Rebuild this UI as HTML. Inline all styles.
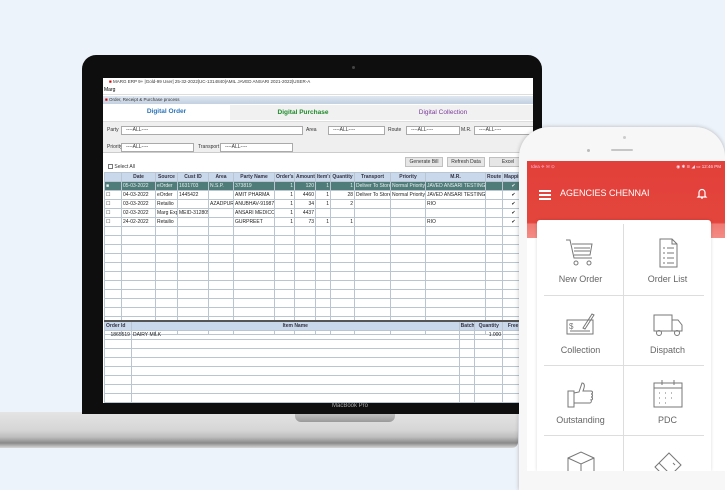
<!DOCTYPE html>
<html><head><meta charset="utf-8"><style>
*{margin:0;padding:0;box-sizing:border-box}
html,body{width:725px;height:490px;overflow:hidden}
body{background:#edf3fa;font-family:"Liberation Sans",sans-serif;position:relative}
#w{position:absolute;left:0;top:0;width:725px;height:490px;overflow:hidden}
.a{position:absolute}
table{border-collapse:collapse;table-layout:fixed;font-size:5px}
td{border:1px solid #b9c6d2;height:9px;padding:0 1px;white-space:nowrap;overflow:hidden;color:#222}
.h td{background:#c9d8ea;text-align:center;font-weight:bold;color:#334}
.s td{background:#4f7b78;color:#e8f0f0}
.r{text-align:right}
.sel{font-size:5px;border:1px solid #aaa;background:#fff;height:9px;color:#333;padding-left:4px;line-height:7px}
.btn{font-size:5px;background:#e6e6e6;border:1px solid #c0c0c0;text-align:center;line-height:9px;height:10px;color:#333}
.lbl{font-size:5px;color:#333}
.cell{position:absolute;width:87px;height:71px;text-align:center;font-size:9px;color:#666}
.cell svg{display:block;margin:12px auto 4px}
</style></head><body><div id="w">

<div class="a" style="left:0;top:412px;width:518px;height:36px;background:linear-gradient(#e4e4e4,#d6d6d6 50%,#bdbdbd 70%,#8a8a8a 86%,#d8d8d8);border-radius:0 0 6px 0"></div>
<div class="a" style="left:295px;top:412px;width:100px;height:10px;background:linear-gradient(#c8c8c8,#9a9a9a);border-radius:0 0 6px 6px"></div>
<div class="a" style="left:82px;top:55px;width:460px;height:359px;background:#0e0e0e;border-radius:14px 14px 0 0"></div>
<div class="a" style="left:352px;top:66px;width:3px;height:3px;background:#444;border-radius:50%"></div>
<div class="a" style="left:320px;top:403px;width:60px;font-size:6px;color:#aaa;text-align:center">MacBook Pro</div>
<div class="a" style="left:103px;top:78px;width:430px;height:325px;background:#fff;overflow:hidden">
 <div class="a" style="left:0;top:0;width:430px;height:8px;background:#fff;font-size:4.5px;color:#333;padding-left:6px;line-height:8px"><span style="color:#c00">■</span> MARG ERP 9+ |Gold-99 User| 25-32-2022|UC-1314840|AMIL JAVED ANSARI 2021-2022|USER-A</div>
 <div class="a" style="left:0;top:8px;width:430px;height:9px;font-size:5px;line-height:9px;padding-left:1px;border-bottom:1px solid #ddd">Marg</div>
 <div class="a" style="left:0;top:18px;width:430px;height:8px;background:linear-gradient(#dfe7f1,#c3d0e0);font-size:4.5px;line-height:8px;padding-left:2px;color:#333"><span style="color:#c00">■</span> Order, Receipt &amp; Purchase process</div>
 <div class="a" style="left:0;top:27px;width:127px;height:15px;background:#fff;font-size:6.5px;color:#2b74b8;text-align:center;line-height:13px;font-weight:bold">Digital Order</div>
 <div class="a" style="left:127px;top:27px;width:303px;height:15px;background:#f1f1f1"></div>
 <div class="a" style="left:150px;top:27px;width:100px;height:15px;font-size:6.5px;color:#1e8a2a;text-align:center;line-height:15px;font-weight:bold">Digital Purchase</div>
 <div class="a" style="left:285px;top:27px;width:110px;height:15px;font-size:6.5px;color:#7a3c9a;text-align:center;line-height:15px">Digital Collection</div>
 <div class="a" style="left:450px;top:27px;font-size:6.5px;color:#d01010;line-height:15px;font-weight:bold">Exit</div>
 <div class="a" style="left:0;top:43px;width:430px;height:32px;background:#efefef;border-top:1px solid #ddd;border-bottom:1px solid #ccc"></div>
 <div class="a lbl" style="left:4px;top:49px">Party</div>
 <div class="a sel" style="left:18px;top:48px;width:182px">----ALL----</div>
 <div class="a lbl" style="left:203px;top:49px">Area</div>
 <div class="a sel" style="left:225px;top:48px;width:57px">----ALL----</div>
 <div class="a lbl" style="left:285px;top:49px">Route</div>
 <div class="a sel" style="left:303px;top:48px;width:54px">----ALL----</div>
 <div class="a lbl" style="left:358px;top:49px">M.R.</div>
 <div class="a sel" style="left:371px;top:48px;width:60px">----ALL----</div>
 <div class="a lbl" style="left:4px;top:66px">Priority</div>
 <div class="a sel" style="left:18px;top:65px;width:73px">----ALL----</div>
 <div class="a lbl" style="left:95px;top:66px">Transport</div>
 <div class="a sel" style="left:117px;top:65px;width:73px">----ALL----</div>
 <div class="a lbl" style="left:5px;top:86px"><span style="display:inline-block;width:5px;height:5px;border:1px solid #777;vertical-align:middle"></span> Select All</div>
 <div class="a btn" style="left:302px;top:79px;width:38px">Generate Bill</div>
 <div class="a btn" style="left:344px;top:79px;width:38px">Refresh Data</div>
 <div class="a btn" style="left:386px;top:79px;width:38px">Excel</div>
 <table class="a" style="left:1px;top:94px;width:420px">
 <colgroup><col style="width:17px"><col style="width:34px"><col style="width:22px"><col style="width:31px"><col style="width:25px"><col style="width:41px"><col style="width:20px"><col style="width:21px"><col style="width:15px"><col style="width:24px"><col style="width:36px"><col style="width:35px"><col style="width:60px"><col style="width:17px"><col style="width:22px"></colgroup>
 <tr class="h"><td></td><td>Date</td><td>Source</td><td>Cust ID</td><td>Area</td><td>Party Name</td><td>Order's</td><td>Amount</td><td>Item's</td><td>Quantity</td><td>Transport</td><td>Priority</td><td>M.R.</td><td>Route</td><td>Mapping</td></tr>
 <tr class="s"><td>■</td><td>05-03-2022</td><td>eOrder</td><td>1631703</td><td>N.S.P.</td><td>373819</td><td class="r">1</td><td class="r">120</td><td class="r">1</td><td class="r">1</td><td>Deliver To Store</td><td>Normal Priority</td><td>JAVED ANSARI TESTING</td><td></td><td style="text-align:center">✔</td></tr>
 <tr><td>☐</td><td>04-03-2022</td><td>eOrder</td><td>1445422</td><td></td><td>AMIT PHARMA</td><td class="r">1</td><td class="r">4460</td><td class="r">1</td><td class="r">28</td><td>Deliver To Store</td><td>Normal Priority</td><td>JAVED ANSARI TESTING</td><td></td><td style="text-align:center">✔</td></tr>
 <tr><td>☐</td><td>03-03-2022</td><td>Retailio</td><td></td><td>AZADPUR</td><td>ANUBHAV-91987</td><td class="r">1</td><td class="r">34</td><td class="r">1</td><td class="r">2</td><td></td><td></td><td>RIO</td><td></td><td style="text-align:center">✔</td></tr>
 <tr><td>☐</td><td>02-03-2022</td><td>Marg Exp</td><td>MEID-312805</td><td></td><td>ANSARI MEDICO</td><td class="r">1</td><td class="r">4437</td><td></td><td></td><td></td><td></td><td></td><td></td><td style="text-align:center">✔</td></tr>
 <tr><td>☐</td><td>24-02-2022</td><td>Retailio</td><td></td><td></td><td>GURPREET</td><td class="r">1</td><td class="r">73</td><td class="r">1</td><td class="r">1</td><td></td><td></td><td>RIO</td><td></td><td style="text-align:center">✔</td></tr>
 <tr><td></td><td></td><td></td><td></td><td></td><td></td><td></td><td></td><td></td><td></td><td></td><td></td><td></td><td></td><td></td></tr>
 <tr><td></td><td></td><td></td><td></td><td></td><td></td><td></td><td></td><td></td><td></td><td></td><td></td><td></td><td></td><td></td></tr>
 <tr><td></td><td></td><td></td><td></td><td></td><td></td><td></td><td></td><td></td><td></td><td></td><td></td><td></td><td></td><td></td></tr>
 <tr><td></td><td></td><td></td><td></td><td></td><td></td><td></td><td></td><td></td><td></td><td></td><td></td><td></td><td></td><td></td></tr>
 <tr><td></td><td></td><td></td><td></td><td></td><td></td><td></td><td></td><td></td><td></td><td></td><td></td><td></td><td></td><td></td></tr>
 <tr><td></td><td></td><td></td><td></td><td></td><td></td><td></td><td></td><td></td><td></td><td></td><td></td><td></td><td></td><td></td></tr>
 <tr><td></td><td></td><td></td><td></td><td></td><td></td><td></td><td></td><td></td><td></td><td></td><td></td><td></td><td></td><td></td></tr>
 <tr><td></td><td></td><td></td><td></td><td></td><td></td><td></td><td></td><td></td><td></td><td></td><td></td><td></td><td></td><td></td></tr>
 <tr><td></td><td></td><td></td><td></td><td></td><td></td><td></td><td></td><td></td><td></td><td></td><td></td><td></td><td></td><td></td></tr>
 <tr><td></td><td></td><td></td><td></td><td></td><td></td><td></td><td></td><td></td><td></td><td></td><td></td><td></td><td></td><td></td></tr>
 <tr><td></td><td></td><td></td><td></td><td></td><td></td><td></td><td></td><td></td><td></td><td></td><td></td><td></td><td></td><td></td></tr>
 <tr style="border-top:2px solid #333"><td></td><td></td><td></td><td></td><td></td><td style="font-weight:bold">Total</td><td class="r" style="font-weight:bold">5</td><td class="r" style="font-weight:bold">9144</td><td class="r" style="font-weight:bold">4</td><td class="r" style="font-weight:bold">32</td><td></td><td></td><td></td><td></td><td></td></tr>
 </table>
 <table class="a" style="left:1px;top:242px;width:420px;border-top:2px solid #555">
 <colgroup><col style="width:26px"><col style="width:316px"><col style="width:15px"><col style="width:27px"><col style="width:20px"></colgroup>
 <tr class="h"><td style="text-align:left">Order Id</td><td>Item Name</td><td>Batch</td><td>Quantity</td><td>Free</td></tr>
 <tr><td class="r">1865519</td><td>DAIRY MILK</td><td></td><td class="r">1.000</td><td class="r">0</td></tr>
 <tr><td></td><td></td><td></td><td></td><td></td></tr>
 <tr><td></td><td></td><td></td><td></td><td></td></tr>
 <tr><td></td><td></td><td></td><td></td><td></td></tr>
 <tr><td></td><td></td><td></td><td></td><td></td></tr>
 <tr><td></td><td></td><td></td><td></td><td></td></tr>
 <tr><td></td><td></td><td></td><td></td><td></td></tr>
 <tr><td></td><td></td><td></td><td></td><td></td></tr>
 </table>
</div>

<div class="a" style="left:519px;top:127px;width:206px;height:363px;background:#f7f7f7;border-radius:30px 30px 0 0;box-shadow:0 0 4px rgba(0,0,0,.25)"></div>
<div class="a" style="left:587px;top:149px;width:3px;height:3px;border-radius:50%;background:#bbb"></div>
<div class="a" style="left:611px;top:149px;width:22px;height:2px;border-radius:1px;background:#c6c6c6"></div>
<div class="a" style="left:623px;top:136px;width:3px;height:3px;border-radius:50%;background:#ccc"></div>
<div class="a" style="left:527px;top:161px;width:198px;height:310px;background:#fff;overflow:hidden">
 <div class="a" style="left:0;top:0;width:198px;height:77px;background:linear-gradient(#e2403a,#e3453c 80%,#f07a73 82%,#f38c85)"></div>
 <div class="a" style="left:4px;top:3px;font-size:4.5px;color:#fbd">Idea ✈ ✉ ⊙</div>
 <div class="a" style="right:4px;top:3px;font-size:4.5px;color:#fde">◉ ✱ ≋ ◢ ▭ 12:46 PM</div>
 <div class="a" style="left:12px;top:29px;width:12px;height:2px;background:#fff;box-shadow:0 4px #fff,0 8px #fff"></div>
 <div class="a" style="left:33px;top:27px;font-size:9px;color:#fff">AGENCIES CHENNAI</div>
 <svg class="a" style="left:169px;top:26px" width="12" height="12" viewBox="0 0 12 12"><path d="M3 9V5.5a3 3 0 0 1 6 0V9l1 1H2z M5 11h2" fill="none" stroke="#fff" stroke-width="1.2"/></svg>
 <div class="a" style="left:10px;top:59px;width:174px;height:251px;background:#fff;border-radius:3px 3px 0 0;box-shadow:0 0 3px rgba(0,0,0,.15);overflow:hidden">
  <div class="a" style="left:86px;top:4px;width:1px;height:256px;background:#ddd"></div>
  <div class="a" style="left:7px;top:75px;width:160px;height:1px;background:#ddd"></div>
  <div class="a" style="left:7px;top:145px;width:160px;height:1px;background:#ddd"></div>
  <div class="a" style="left:7px;top:215px;width:160px;height:1px;background:#ddd"></div>
  <div class="cell" style="left:0;top:4px"><svg width="34" height="34" viewBox="0 0 34 34" fill="none" stroke="#777" stroke-width="1"><path d="M2 4h4l4 18h18M8 8h20l-2 11H10M10 12h16M10 15h16"/><circle cx="12" cy="27" r="2"/><circle cx="25" cy="27" r="2"/></svg>New Order</div>
  <div class="cell" style="left:87px;top:4px"><svg width="34" height="34" viewBox="0 0 34 34" fill="none" stroke="#777" stroke-width="1"><path d="M9 3h12l5 5v23H9zM21 3v5h5M12 12h2M16 12h7M12 17h2M16 17h7M12 22h2M16 22h7M12 27h2M16 27h7"/></svg>Order List</div>
  <div class="cell" style="left:0;top:75px"><svg width="34" height="34" viewBox="0 0 34 34" fill="none" stroke="#777" stroke-width="1"><path d="M3 13h26v14H3zM6 24h20M19 21l9-14 2 1-9 14z"/><text x="5" y="22" font-size="8" fill="#777" stroke="none">$</text></svg>Collection</div>
  <div class="cell" style="left:87px;top:75px"><svg width="34" height="34" viewBox="0 0 34 34" fill="none" stroke="#777" stroke-width="1"><path d="M3 8h18v16H3zM21 13h6l4 5v6H21"/><circle cx="8" cy="26" r="2.5"/><circle cx="26" cy="26" r="2.5"/></svg>Dispatch</div>
  <div class="cell" style="left:0;top:145px"><svg width="34" height="34" viewBox="0 0 34 34" fill="none" stroke="#777" stroke-width="1"><path d="M4 14h6v16H4zM10 16l5-1 3-9c2 0 3 2 2 5l-1 3h8c2 0 2 3 0 3 2 0 2 3 0 3 2 0 2 3 0 3 1 1 0 3-1 3H10"/></svg>Outstanding</div>
  <div class="cell" style="left:87px;top:145px"><svg width="34" height="34" viewBox="0 0 34 34" fill="none" stroke="#777" stroke-width="1"><path d="M3 6h28v24H3zM3 11h28M11 3v5M23 3v5"/><path d="M8 16h2M14 16h2M20 16h2M8 21h2M14 21h2M20 21h2M8 26h2M14 26h2" stroke-dasharray="1 1"/></svg>PDC</div>
  <div class="cell" style="left:0;top:215px;height:36px;overflow:hidden"><svg width="34" height="34" viewBox="0 0 34 34" fill="none" stroke="#777" stroke-width="1"><path d="M4 11l13-6 13 6v14l-13 6-13-6zM4 11l13 6 13-6M17 17v14"/></svg></div>
  <div class="cell" style="left:87px;top:215px;height:36px;overflow:hidden"><svg width="34" height="34" viewBox="0 0 34 34" fill="none" stroke="#777" stroke-width="1"><path d="M4 20l14-14 12 12-14 14zM8 16l12 12M22 16l2 2"/></svg></div>
 </div>
</div>
</div></body></html>
